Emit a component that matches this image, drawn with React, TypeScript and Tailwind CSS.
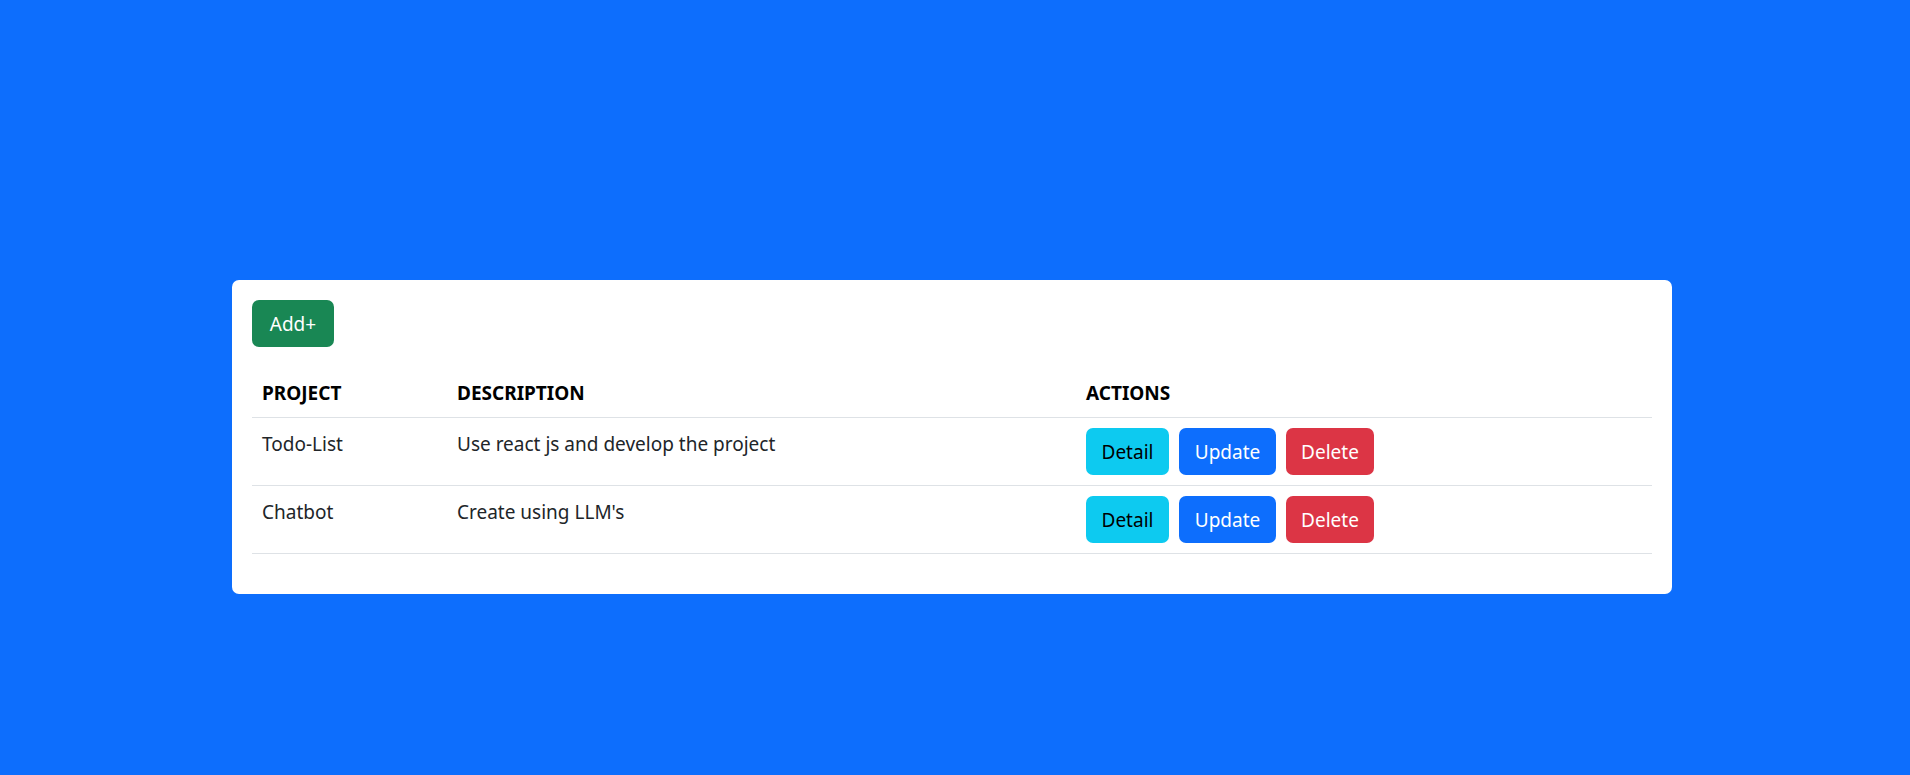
import React from "react";

const rows = [
  { project: "Todo-List", description: "Use react js and develop the project" },
  { project: "Chatbot", description: "Create using LLM's" },
];

const btn =
  "h-[47px] px-0 pt-[1px] rounded-[7px] text-[19px] leading-[30px] border border-transparent";

export default function App() {
  return (
    <div
      className="min-h-[775px] w-full bg-[#0d6efd] pt-[280px] pl-[232px]"
      style={{ fontFamily: '"Noto Sans", "Open Sans", sans-serif' }}
    >
      <div className="w-[1440px] bg-white rounded-[7px] p-5 text-[#212529]">
        <button className={`${btn} bg-[#198754] text-white w-[82px]`}>Add+</button>
        <table className="w-[1400px] mt-5 mb-5 text-[19px] leading-[30px] border-collapse table-fixed">
          <thead>
            <tr className="border-b border-[#dee2e6]">
              <th className="text-left font-bold text-black px-[10px] pt-[11px] pb-[9px] w-[195px]">PROJECT</th>
              <th className="text-left font-bold text-black px-[10px] pt-[11px] pb-[9px] w-[629px]">DESCRIPTION</th>
              <th className="text-left font-bold text-black px-[10px] pt-[11px] pb-[9px]">ACTIONS</th>
            </tr>
          </thead>
          <tbody>
            {rows.map((r) => (
              <tr key={r.project} className="border-b border-[#dee2e6] h-[68px]">
                <td className="align-top px-[10px] pt-[11px]">{r.project}</td>
                <td className="align-top px-[10px] pt-[11px]">{r.description}</td>
                <td className="align-top px-[10px] pt-[10px]">
                  <div className="flex gap-[10px]">
                    <button className={`${btn} bg-[#0dcaf0] text-black w-[83px]`}>Detail</button>
                    <button className={`${btn} bg-[#0d6efd] text-white w-[97px]`}>Update</button>
                    <button className={`${btn} bg-[#dc3545] text-white w-[88px]`}>Delete</button>
                  </div>
                </td>
              </tr>
            ))}
          </tbody>
        </table>
      </div>
    </div>
  );
}
